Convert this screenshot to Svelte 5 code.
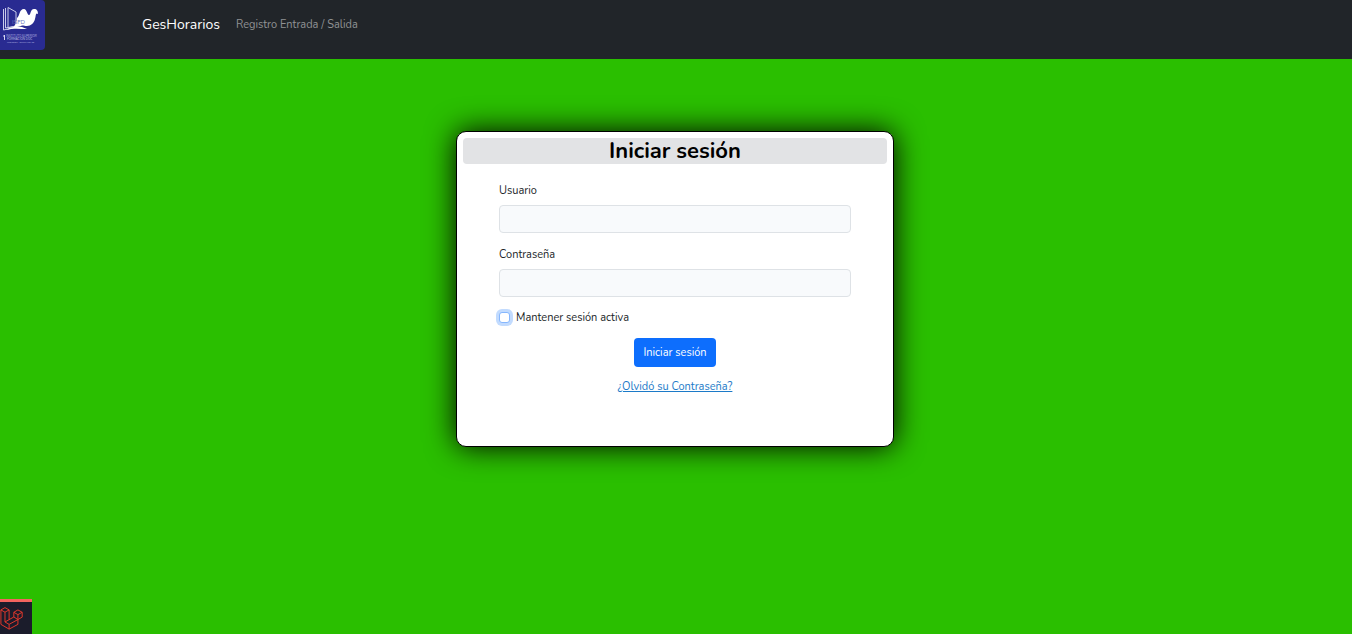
<script>
  let user = $state('');
  let password = $state('');
  let remember = $state(false);
</script>

<div class="page">
  <header>
    <a class="logo" href="#inicio" aria-label="ISFD">
      <svg viewBox="0 0 45 50" width="45" height="50">
        <path d="M0 0H41Q45 0 45 4V46Q45 50 41 50H0Z" fill="#292b91" />
        <g fill="none" stroke="#c9cbea" stroke-width="1">
          <path d="M3.500 9V30L17 27" />
          <path d="M5.500 8V28L16 26" />
          <path d="M8 7.500L16 12V26L8 28Z" />
        </g>
        <path d="M17 18C20 16 19 9 24 9C27 9 27 15 29 15C31 15 30 9 34 9C37 9 38 11 38 14C35.500 12 36 16 35 19C34 23 31 26 27 26C24 26 23 25 21 26L13 28C16 24 17 21 17 18Z" fill="#fff" />
        <path d="M6 30C13 26 19 25 27 29C20 29 13 28 6 30Z" fill="#fff" />
        <text x="12" y="24" font-size="6" fill="#6873bb">ISFD</text>
        <path d="M4.500 35V40M3 36H5" stroke="#d4d5f0" fill="none" />
        <text x="6" y="37" font-size="3" fill="#b9bbe6">INSTITUTO SUPERIOR</text>
        <text x="7" y="40" font-size="3" fill="#c9cbea">FORMACION DOC</text>
        <text x="7" y="43" font-size="2" fill="#b0b2e0">PROFESOR AGUSTIN GOMEZ</text>
      </svg>
    </a>
    <nav>
      <a class="brand" href="#inicio">GesHorarios</a>
      <a class="entry" href="#registro">Registro Entrada / Salida</a>
    </nav>
  </header>

  <main>
    <section class="card">
      <h1>Iniciar sesión</h1>
      <form onsubmit={(e) => e.preventDefault()}>
        <label for="user">Usuario</label>
        <input class="field" id="user" type="text" bind:value={user} />
        <label for="password">Contraseña</label>
        <input class="field" id="password" type="password" bind:value={password} />
        <div class="check">
          <input id="remember" type="checkbox" bind:checked={remember} />
          <label for="remember">Mantener sesión activa</label>
        </div>
        <button type="submit">Iniciar sesión</button>
        <a class="forgot" href="#clave">¿Olvidó su Contraseña?</a>
      </form>
    </section>
  </main>

  <button class="debug" type="button" aria-label="Laravel">
    <svg viewBox="-1 -1 52 53" width="23" height="23" fill="none" stroke="#e8392c" stroke-width="2.200" stroke-linejoin="round">
      <path d="M.6 5.700L10 .4L19.500 5.700L10 11ZM.6 5.700V39L19.500 50L39.800 39V16.600M10 11V33.500L19.500 39V50M19.500 5.700V28M10 33.500L30.400 22M19.500 39L39.800 27.900M30.400 11.200L39.800 5.700L49.600 11.200L39.800 16.600ZM30.400 11.200V22L39.800 27.900L49.600 22.400V11.200" />
    </svg>
  </button>
</div>

<style>
  :global(body) {
    margin: 0;
    background: #2abf00;
  }
  .page {
    min-height: 100vh;
    font-family: Nunito, Lato, sans-serif;
    font-size: 11px;
    line-height: 18px;
    color: #212529;
  }
  .page * {
    box-sizing: border-box;
  }
  header {
    display: grid;
    grid-template-columns: 1fr minmax(0, 1068px) 1fr;
    min-height: 59px;
    background: #212529;
  }
  .logo {
    width: 45px;
    height: 50px;
  }
  .logo svg {
    display: block;
  }
  nav {
    display: flex;
    align-items: center;
    gap: 16px;
    height: 50px;
  }
  nav a {
    text-decoration: none;
    white-space: nowrap;
  }
  .brand {
    font-size: 14px;
    color: #fff;
  }
  .entry {
    color: #909294;
  }
  main {
    padding: 72px 18px 72px 16px;
  }
  .card {
    max-width: 438px;
    min-height: 316px;
    margin: 0 auto;
    padding: 6px;
    border: 1px solid #000;
    border-radius: 10px;
    background: #fff;
    box-shadow: 0 0 30px #000;
  }
  h1 {
    margin: 0;
    border-radius: 4px;
    background: #e2e3e5;
    color: #000;
    font-size: 22px;
    line-height: 26px;
    font-weight: 700;
    text-align: center;
  }
  form {
    display: flex;
    flex-direction: column;
    padding: 18px 36px 0;
  }
  .field {
    width: 100%;
    height: 28px;
    margin: 5px 0 13px;
    padding: 4px 8px;
    border: 1px solid #dee2e6;
    border-radius: 4px;
    background: #f8fafc;
    font: inherit;
  }
  .check {
    display: flex;
    align-items: flex-start;
    gap: 6px;
    line-height: 16px;
  }
  .check input {
    appearance: none;
    width: 11px;
    height: 11px;
    margin: 2px 0 0;
    border: 1px solid #86b7fe;
    border-radius: 3px;
    background: #fff;
    box-shadow: 0 0 0 3px #c2dbfe;
  }
  .check input:checked {
    background: #0d6efd;
  }
  form button {
    align-self: center;
    height: 29px;
    margin: 12px 0 11px;
    padding: 0 9px;
    border: 0;
    border-radius: 4px;
    background: #0d6efd;
    color: #fff;
    font: inherit;
  }
  .forgot {
    align-self: center;
    color: #1c7ac8;
  }
  .debug {
    position: fixed;
    left: 0;
    bottom: 0;
    width: 32px;
    height: 35px;
    padding: 0;
    border: 0;
    border-top: 3px solid #f4645f;
    background: #1b1c2b;
    text-align: left;
  }
  .debug svg {
    display: block;
  }
</style>
